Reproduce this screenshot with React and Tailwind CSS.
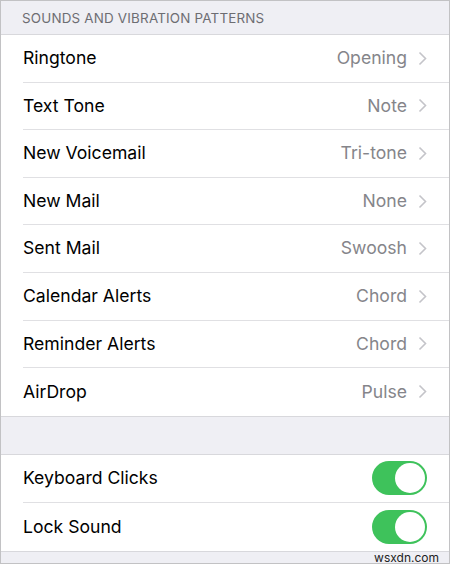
import React from "react";

const tones = [
  ["Ringtone", "Opening"],
  ["Text Tone", "Note"],
  ["New Voicemail", "Tri-tone"],
  ["New Mail", "None"],
  ["Sent Mail", "Swoosh"],
  ["Calendar Alerts", "Chord"],
  ["Reminder Alerts", "Chord"],
  ["AirDrop", "Pulse"],
];

function Chevron() {
  return (
    <svg width="9" height="15" viewBox="0 0 9 15" className="ml-[11px]">
      <path d="M1.5 1.5 L7.5 7.5 L1.5 13.5" fill="none" stroke="#c4c4c9" strokeWidth="1.6" />
    </svg>
  );
}

function Toggle() {
  return (
    <div className="w-[55px] h-[34px] rounded-full bg-[#3ec25b] flex items-center justify-end p-[2px]">
      <div className="w-[30px] h-[30px] rounded-full bg-white" />
    </div>
  );
}

function Row({ label, children, last, tall }) {
  return (
    <div className={`${tall ? "h-[48px]" : "h-[47.6px]"} pl-[22px] bg-white`}>
      <div className={`h-full flex items-center pr-[22px] ${last ? "" : "border-b border-[#e0e0e3]"}`}>
        <span className="flex-1 text-[17.6px] text-black">{label}</span>
        {children}
      </div>
    </div>
  );
}

export default function App() {
  return (
    <div
      className="w-[450px] h-[564px] border border-[#c2c2c4] bg-[#efeff4] overflow-hidden flex flex-col"
      style={{ fontFamily: "Inter, 'Liberation Sans', sans-serif" }}
    >
      <div className="h-[34px] shrink-0 flex items-end pl-[21px] pb-[9px] text-[13.4px] tracking-[0.2px] leading-none text-[#6d6d72] border-b border-[#d8d8dc]">
        SOUNDS AND VIBRATION PATTERNS
      </div>
      <div className="border-b border-[#d8d8dc] shrink-0">
        {tones.map(([label, value], i) => (
          <Row key={label} label={label} last={i === tones.length - 1}>
            <span className="text-[17.6px] text-[#85858a]">{value}</span>
            <Chevron />
          </Row>
        ))}
      </div>
      <div className="h-[37px] shrink-0" />
      <div className="border-y border-[#d8d8dc] shrink-0">
        <Row label="Keyboard Clicks" tall>
          <Toggle />
        </Row>
        <Row label="Lock Sound" last tall>
          <Toggle />
        </Row>
      </div>
      <div className="flex-1 flex justify-end items-end pr-[10px]">
        <span className="text-[12px] text-[#222] leading-none mb-[2px]">wsxdn.com</span>
      </div>
    </div>
  );
}
